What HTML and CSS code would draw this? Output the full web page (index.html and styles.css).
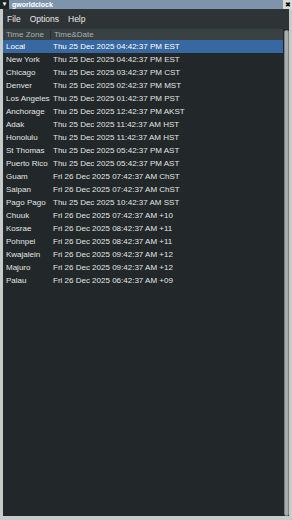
FILE: index.html
```html
<!DOCTYPE html>
<html lang="en">
<head>
    <meta charset="UTF-8">
    <meta name="viewport" content="width=device-width, initial-scale=1.0">
    <title>gworldclock</title>
    <link rel="stylesheet" href="styles.css">
</head>
<body>
    <div class="titlebar">
        <span class="menu-btn">&#9660;</span>
        <span class="title">gworldclock</span>
        <span class="close-btn">&#10006;</span>
    </div>
    <div class="window">
        <div class="menubar">
            <span>File</span>
            <span>Options</span>
            <span>Help</span>
        </div>
        <div class="view">
            <div class="list">
                <div class="row header">
                    <div class="zone">Time Zone</div>
                    <div class="date">Time&amp;Date</div>
                </div>
                <div class="row selected"><div class="zone">Local</div><div class="date">Thu 25 Dec 2025 04:42:37 PM EST</div></div>
                <div class="row"><div class="zone">New York</div><div class="date">Thu 25 Dec 2025 04:42:37 PM EST</div></div>
                <div class="row"><div class="zone">Chicago</div><div class="date">Thu 25 Dec 2025 03:42:37 PM CST</div></div>
                <div class="row"><div class="zone">Denver</div><div class="date">Thu 25 Dec 2025 02:42:37 PM MST</div></div>
                <div class="row"><div class="zone">Los Angeles</div><div class="date">Thu 25 Dec 2025 01:42:37 PM PST</div></div>
                <div class="row"><div class="zone">Anchorage</div><div class="date">Thu 25 Dec 2025 12:42:37 PM AKST</div></div>
                <div class="row"><div class="zone">Adak</div><div class="date">Thu 25 Dec 2025 11:42:37 AM HST</div></div>
                <div class="row"><div class="zone">Honolulu</div><div class="date">Thu 25 Dec 2025 11:42:37 AM HST</div></div>
                <div class="row"><div class="zone">St Thomas</div><div class="date">Thu 25 Dec 2025 05:42:37 PM AST</div></div>
                <div class="row"><div class="zone">Puerto Rico</div><div class="date">Thu 25 Dec 2025 05:42:37 PM AST</div></div>
                <div class="row"><div class="zone">Guam</div><div class="date">Fri 26 Dec 2025 07:42:37 AM ChST</div></div>
                <div class="row"><div class="zone">Saipan</div><div class="date">Fri 26 Dec 2025 07:42:37 AM ChST</div></div>
                <div class="row"><div class="zone">Pago Pago</div><div class="date">Thu 25 Dec 2025 10:42:37 AM SST</div></div>
                <div class="row"><div class="zone">Chuuk</div><div class="date">Fri 26 Dec 2025 07:42:37 AM +10</div></div>
                <div class="row"><div class="zone">Kosrae</div><div class="date">Fri 26 Dec 2025 08:42:37 AM +11</div></div>
                <div class="row"><div class="zone">Pohnpei</div><div class="date">Fri 26 Dec 2025 08:42:37 AM +11</div></div>
                <div class="row"><div class="zone">Kwajalein</div><div class="date">Fri 26 Dec 2025 09:42:37 AM +12</div></div>
                <div class="row"><div class="zone">Majuro</div><div class="date">Fri 26 Dec 2025 09:42:37 AM +12</div></div>
                <div class="row"><div class="zone">Palau</div><div class="date">Fri 26 Dec 2025 06:42:37 AM +09</div></div>
            </div>
            <div class="scrollbar"><div class="thumb"></div></div>
        </div>
    </div>
</body>
</html>
```

FILE: styles.css
```css
html, body {
    margin: 0;
    padding: 0;
    height: 100%;
}
body {
    font-family: "Liberation Sans", Arial, sans-serif;
    font-size: 8px;
    background-color: #c8ccc8;
    display: flex;
    flex-direction: column;
}
.titlebar {
    height: 9px;
    display: flex;
    align-items: center;
    background-color: #7d94ab;
    font-size: 7px;
    line-height: 9px;
}
.menu-btn {
    width: 9px;
    height: 9px;
    background-color: #1e2326;
    color: white;
    font-size: 6px;
    text-align: center;
}
.title {
    flex: 1;
    color: white;
    font-weight: bold;
    padding-left: 3px;
}
.close-btn {
    width: 9px;
    height: 9px;
    background-color: #d8dcd8;
    color: black;
    font-size: 7px;
    text-align: center;
}
.window {
    flex: 1;
    display: flex;
    flex-direction: column;
    border: 3px solid #c8ccc8;
    border-top: none;
    border-bottom-width: 4px;
    background-color: #2e3436;
}
.menubar {
    height: 20px;
    display: flex;
    align-items: center;
    gap: 9px;
    padding-left: 4px;
    font-size: 8.5px;
    color: #e8e8e8;
    background-color: #2e3436;
}
.view {
    flex: 1;
    display: flex;
}
.list {
    flex: 1;
    background-color: #222829;
    color: #e2e4e2;
}
.row {
    height: 13px;
    display: flex;
    align-items: center;
}
.row.header {
    height: 11px;
    background-color: #3a4143;
    color: #a8aeae;
}
.row.selected {
    background-color: #3868a2;
    color: #ffffff;
}
.zone {
    width: 44px;
    padding-left: 3px;
    white-space: nowrap;
}
.header .zone {
    border-right: 1px solid #2a3032;
}
.date {
    padding-left: 3px;
    white-space: nowrap;
}
.scrollbar {
    width: 6px;
    background-color: #222829;
    padding: 1px 0 0 1px;
    box-sizing: border-box;
}
.thumb {
    height: 100%;
    background-color: #a8aeb0;
    border: 1px solid #7a8084;
    border-radius: 2px;
    box-sizing: border-box;
}
```
